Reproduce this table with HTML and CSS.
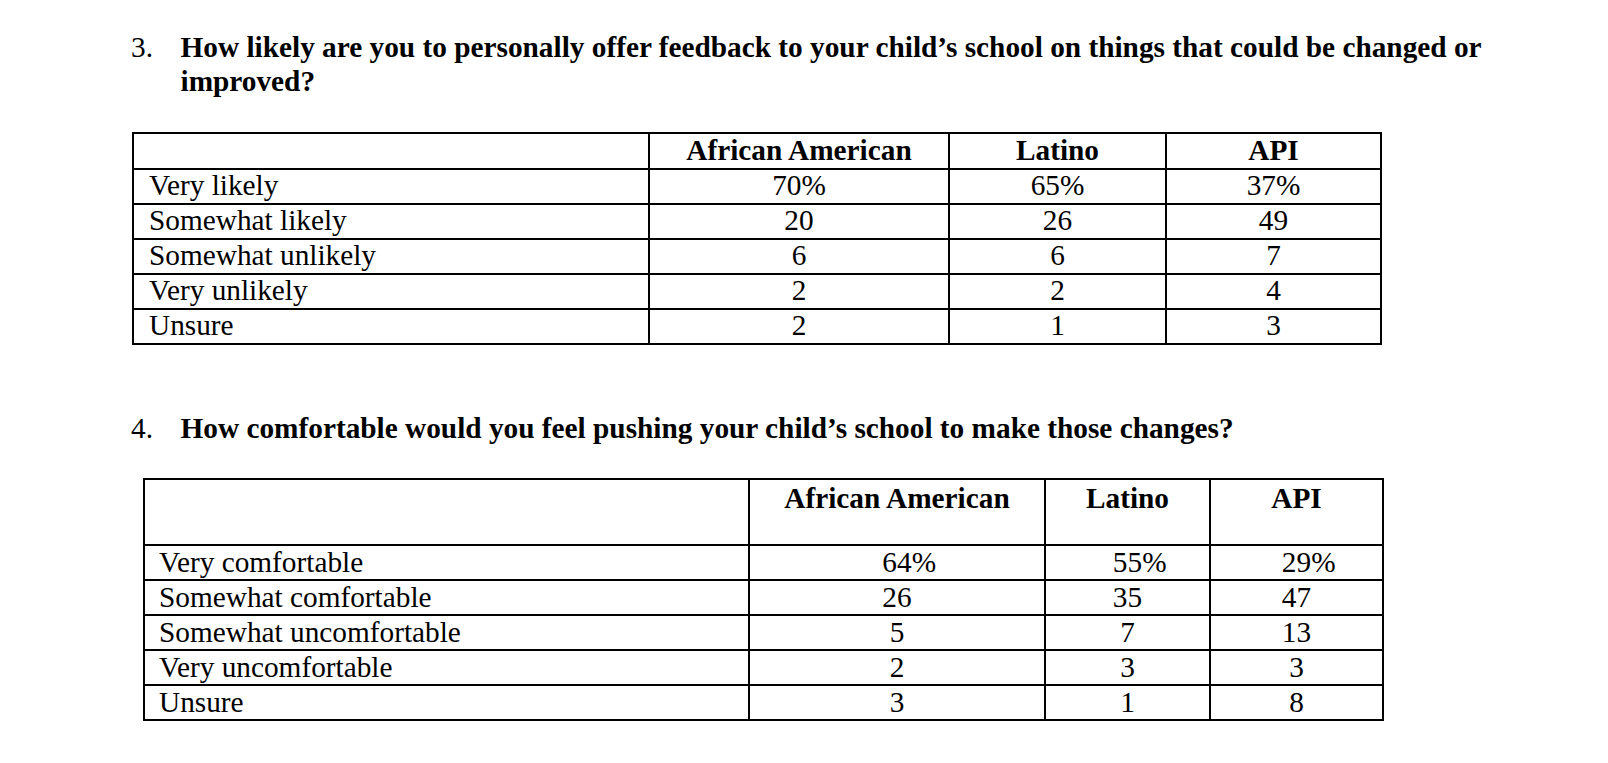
FILE: index.html
```html
<!DOCTYPE html>
<html lang="en">
<head>
<meta charset="utf-8">
<title>Survey results</title>
<link rel="stylesheet" href="styles.css">
</head>
<body>
<main class="page">
  <section class="question q3">
    <h2 class="q-title"><span class="q-num">3.</span><span class="q-text">How likely are you to personally offer feedback to your child’s school on things that could be changed or<br>improved?</span></h2>
    <table class="results t1">
      <colgroup><col class="c-label"><col class="c-aa"><col class="c-lat"><col class="c-api"></colgroup>
      <thead>
        <tr><th></th><th>African American</th><th>Latino</th><th>API</th></tr>
      </thead>
      <tbody>
        <tr><td>Very likely</td><td>70%</td><td>65%</td><td>37%</td></tr>
        <tr><td>Somewhat likely</td><td>20</td><td>26</td><td>49</td></tr>
        <tr><td>Somewhat unlikely</td><td>6</td><td>6</td><td>7</td></tr>
        <tr><td>Very unlikely</td><td>2</td><td>2</td><td>4</td></tr>
        <tr><td>Unsure</td><td>2</td><td>1</td><td>3</td></tr>
      </tbody>
    </table>
  </section>

  <section class="question q4">
    <h2 class="q-title"><span class="q-num">4.</span><span class="q-text">How comfortable would you feel pushing your child’s school to make those changes?</span></h2>
    <table class="results t2">
      <colgroup><col class="c-label"><col class="c-aa"><col class="c-lat"><col class="c-api"></colgroup>
      <thead>
        <tr><th></th><th>African American</th><th>Latino</th><th>API</th></tr>
      </thead>
      <tbody>
        <tr><td>Very comfortable</td><td>64<span class="pct">%</span></td><td>55<span class="pct">%</span></td><td>29<span class="pct">%</span></td></tr>
        <tr><td>Somewhat comfortable</td><td>26</td><td>35</td><td>47</td></tr>
        <tr><td>Somewhat uncomfortable</td><td>5</td><td>7</td><td>13</td></tr>
        <tr><td>Very uncomfortable</td><td>2</td><td>3</td><td>3</td></tr>
        <tr><td>Unsure</td><td>3</td><td>1</td><td>8</td></tr>
      </tbody>
    </table>
  </section>
</main>
</body>
</html>
```

FILE: styles.css
```css
html, body {
  margin: 0;
  padding: 0;
  background: #ffffff;
}

body {
  font-family: "Liberation Serif", "Times New Roman", serif;
  color: #000000;
  font-size: 29.3px;
}

.page {
  padding: 30px 0 0 131px;
}

.q-title {
  display: flex;
  margin: 0;
  font-size: 29.3px;
  line-height: 34px;
  font-weight: 700;
}

.q-num {
  flex: 0 0 49.5px;
  font-weight: 400;
}

.q-text {
  flex: 1 1 auto;
}

.results {
  border-collapse: separate;
  border-spacing: 0;
  table-layout: fixed;
  border-top: 2px solid #000;
  border-left: 2px solid #000;
  font-size: 29.3px;
}

.results th,
.results td {
  padding: 0;
  border-right: 2px solid #000;
  border-bottom: 2px solid #000;
  text-align: center;
  vertical-align: top;
  white-space: nowrap;
}

.results th {
  font-weight: 700;
}

.results td {
  line-height: 28px;
  height: 28px;
  padding-top: 1px;
  padding-bottom: 4px;
}

.results td:first-child {
  text-align: left;
  padding-left: 15px;
}

/* Question 3 */
.q3 .results {
  margin: 34px 0 0 1px;
  width: 1248px;
}

.t1 th {
  line-height: 31px;
  height: 31px;
  padding-top: 1px;
  padding-bottom: 2px;
}

.t1 .c-label { width: 516px; }
.t1 .c-aa { width: 300px; }
.t1 .c-lat { width: 217px; }
.t1 .c-api { width: 215px; }

/* Question 4 */
.q4 {
  margin-top: 66px;
}

.q4 .results {
  margin: 33px 0 0 12px;
  width: 1239px;
}

.t2 th {
  line-height: 31px;
  height: 61px;
  padding-top: 3px;
}

.t2 td {
  padding-top: 2px;
  padding-bottom: 3px;
}

.t2 td:first-child {
  padding-left: 14px;
}

.t2 .c-label { width: 605px; }
.t2 .c-aa { width: 296px; }
.t2 .c-lat { width: 165px; }
.t2 .c-api { width: 173px; }

.pct {
  margin-right: -0.833em;
}
```
